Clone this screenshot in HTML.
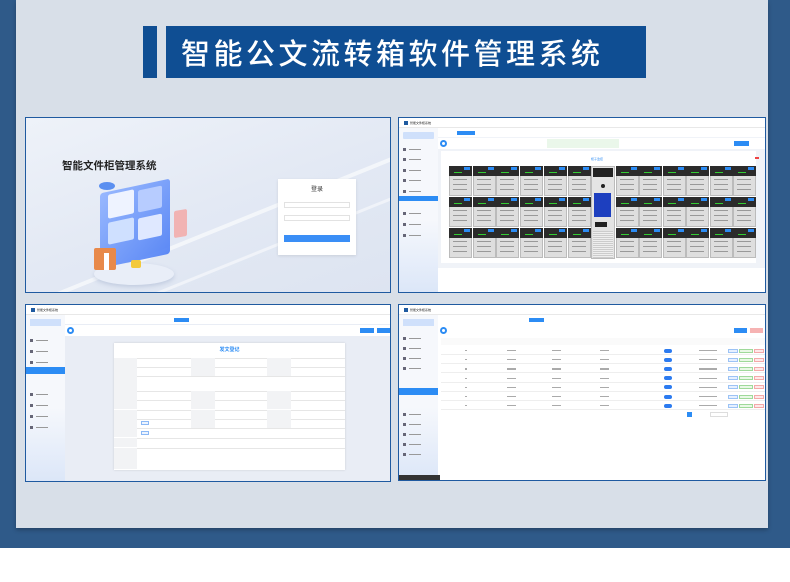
<!DOCTYPE html>
<html><head><meta charset="utf-8">
<style>
*{margin:0;padding:0;box-sizing:border-box}
body{width:790px;height:582px;background:#fff;position:relative;overflow:hidden;font-family:"Liberation Sans","Noto Sans CJK SC",sans-serif}
.a{position:absolute}
.shot{position:absolute;border:1.5px solid #1f5aa0;overflow:hidden;background:#f0f3f8}
.t{font-size:3px;color:#555;white-space:nowrap;line-height:1}
</style></head><body>
<div class="a" style="left:0;top:0;width:790px;height:548px;background:#2f5a89"></div>
<div class="a" style="left:16px;top:0;width:752px;height:528px;background:#d8dfe8;box-shadow:0 2px 4px rgba(0,0,0,.25)"></div>
<div class="a" style="left:143px;top:26px;width:14px;height:52px;background:#0f4e93"></div>
<div class="a" style="left:166px;top:26px;width:480px;height:52px;background:#0f4e93;color:#fff;font-size:29px;line-height:52px;padding-left:15px;letter-spacing:3.5px;font-family:'Noto Sans CJK SC',sans-serif;font-weight:500">智能公文流转箱软件管理系统</div>

<!-- TL login -->
<div class="shot" style="left:25px;top:117px;width:366px;height:176px;background:linear-gradient(160deg,#eef2f9 0%,#e3e9f4 50%,#dde4f1 100%)">
 <div class="a" style="left:-20px;top:110px;width:420px;height:4px;background:rgba(255,255,255,.6);transform:rotate(-22deg)"></div>
 <div class="a" style="left:-20px;top:150px;width:420px;height:3px;background:rgba(255,255,255,.5);transform:rotate(-22deg)"></div>
 <div class="a" style="left:36px;top:40px;font-size:10.5px;font-weight:bold;color:#222;font-family:'Noto Sans CJK SC',sans-serif">智能文件柜管理系统</div>
 <div class="a" style="left:68px;top:145px;width:80px;height:22px;border-radius:50%;background:#e9eef8;box-shadow:0 2px 4px rgba(120,140,180,.3)"></div>
 <div class="a" style="left:74px;top:68px;width:70px;height:75px;background:linear-gradient(135deg,#8fb2ff,#4d7ef5);border-radius:3px;transform:skewY(-12deg);opacity:.9"></div>
 <div class="a" style="left:82px;top:74px;width:26px;height:24px;background:#eef3ff;border-radius:2px;transform:skewY(-12deg)"></div>
 <div class="a" style="left:112px;top:70px;width:24px;height:22px;background:#b7ccff;border-radius:2px;transform:skewY(-12deg)"></div>
 <div class="a" style="left:82px;top:102px;width:26px;height:22px;background:#cfe0ff;border-radius:2px;transform:skewY(-12deg)"></div>
 <div class="a" style="left:112px;top:98px;width:24px;height:22px;background:#dfe8ff;border-radius:2px;transform:skewY(-12deg)"></div>
 <div class="a" style="left:68px;top:130px;width:22px;height:22px;background:#e8894a;border-radius:2px"></div>
 <div class="a" style="left:78px;top:135px;width:5px;height:17px;background:#fff"></div>
 <div class="a" style="left:105px;top:142px;width:10px;height:8px;background:#f3c93b;border-radius:2px"></div>
 <div class="a" style="left:148px;top:92px;width:13px;height:27px;background:#f1b3b3;border-radius:2px;transform:skewY(-10deg)"></div>
 <div class="a" style="left:73px;top:64px;width:16px;height:8px;background:#5b8ff0;border-radius:50%"></div>
 <div class="a" style="left:252px;top:61px;width:78px;height:76px;background:#fff;box-shadow:0 1px 3px rgba(0,0,0,.1)"></div>
 <div class="a" style="left:252px;top:66px;width:78px;text-align:center;font-size:6px;color:#333">登录</div>
 <div class="a" style="left:258px;top:84px;width:66px;height:6px;border:0.5px solid #e2e2e2"></div>
 <div class="a" style="left:258px;top:97px;width:66px;height:6px;border:0.5px solid #e2e2e2"></div>
 <div class="a" style="left:258px;top:117px;width:66px;height:7px;background:#3a8ef6"></div>
</div>

<!-- TR cabinets -->
<div class="shot" id="tr" style="left:398px;top:117px;width:368px;height:176px;background:#fff">
 <div class="a" style="left:0;top:0;width:368px;height:10px;background:#fff;border-bottom:.5px solid #e8e8e8"></div>
 <div class="a" style="left:5px;top:3px;width:4px;height:4px;background:#1f5aa0"></div>
 <div class="a t" style="left:11px;top:3.5px;color:#222">智能文件柜系统</div>
 <div class="a" id="sb1" style="left:0;top:10px;width:39px;height:166px;background:linear-gradient(180deg,#f6f8fc 55%,#dbe6f8)"></div>
 <div class="a" style="left:4px;top:14px;width:31px;height:7px;background:#cfe0fb;border-radius:1px"></div>
 <div class="a" style="left:0;top:78px;width:39px;height:5px;background:#2c8cf4"></div>
 <div class="a" style="left:39px;top:10px;width:329px;height:166px;background:#f0f3f8"></div>
 <div class="a" style="left:39px;top:10px;width:329px;height:9px;background:#fff"></div>
 <div class="a" style="left:58px;top:13px;width:18px;height:4px;background:#2c8cf4"></div>
 <div class="a" style="left:39px;top:20px;width:329px;height:11px;background:#fff"></div>
 <div class="a" style="left:41px;top:22px;width:7px;height:7px;border-radius:50%;border:2px solid #2c8cf4"></div>
 <div class="a" style="left:148px;top:21px;width:72px;height:9px;background:#eaf7ea"></div>
 <div class="a" style="left:335px;top:23px;width:15px;height:5px;background:#2c8cf4"></div>
 <div class="a" style="left:42px;top:33px;width:315px;height:112px;background:#fff"></div>
 <div class="a" style="left:39px;top:150px;width:329px;height:26px;background:#fff"></div>
 <div class="a" style="left:192px;top:39px;font-size:3px;color:#2c8cf4">柜子监控</div>
 <div class="a" style="left:356px;top:39px;width:4px;height:2px;background:#e44"></div>
 <div id="cab"></div>
</div>

<!-- BL form -->
<div class="shot" style="left:25px;top:304px;width:366px;height:178px;background:#e9edf5">
 <div class="a" style="left:0;top:0;width:366px;height:10px;background:#fff;border-bottom:.5px solid #e8e8e8"></div>
 <div class="a" style="left:5px;top:3px;width:4px;height:4px;background:#1f5aa0"></div>
 <div class="a t" style="left:11px;top:3.5px;color:#222">智能文件柜系统</div>
 <div class="a" style="left:0;top:10px;width:39px;height:168px;background:linear-gradient(180deg,#f6f8fc 55%,#dbe6f8)"></div>
 <div class="a" style="left:4px;top:14px;width:31px;height:7px;background:#cfe0fb"></div>
 <div class="a" style="left:0;top:62px;width:39px;height:7px;background:#2c8cf4"></div>
 <div class="a" style="left:39px;top:10px;width:327px;height:9px;background:#fff"></div>
 <div class="a" style="left:148px;top:13px;width:15px;height:4px;background:#2c8cf4"></div>
 <div class="a" style="left:39px;top:20px;width:327px;height:11px;background:#fff"></div>
 <div class="a" style="left:41px;top:22px;width:7px;height:7px;border-radius:50%;border:2px solid #2c8cf4"></div>
 <div class="a" style="left:334px;top:23px;width:14px;height:5px;background:#2c8cf4"></div>
 <div class="a" style="left:351px;top:23px;width:13px;height:5px;background:#2c8cf4"></div>
 <div class="a" style="left:88px;top:38px;width:231px;height:127px;background:#fff;box-shadow:0 0 2px rgba(0,0,0,.15)"></div>
 <div class="a" style="left:88px;top:41px;width:231px;text-align:center;font-size:5px;color:#2c8cf4;font-weight:bold">发文登记</div>
 <div id="form"></div>
</div>

<!-- BR table -->
<div class="shot" style="left:398px;top:304px;width:368px;height:177px;background:#fff">
 <div class="a" style="left:0;top:0;width:368px;height:10px;background:#fff;border-bottom:.5px solid #e8e8e8"></div>
 <div class="a" style="left:5px;top:3px;width:4px;height:4px;background:#1f5aa0"></div>
 <div class="a t" style="left:11px;top:3.5px;color:#222">智能文件柜系统</div>
 <div class="a" style="left:0;top:10px;width:39px;height:167px;background:linear-gradient(180deg,#f6f8fc 55%,#dbe6f8)"></div>
 <div class="a" style="left:4px;top:14px;width:31px;height:7px;background:#cfe0fb"></div>
 <div class="a" style="left:0;top:83px;width:39px;height:7px;background:#2c8cf4"></div>
 <div class="a" style="left:0;top:170px;width:41px;height:5px;background:#333"></div>
 <div class="a" style="left:39px;top:10px;width:329px;height:9px;background:#fff"></div>
 <div class="a" style="left:130px;top:13px;width:15px;height:4px;background:#2c8cf4"></div>
 <div class="a" style="left:41px;top:22px;width:7px;height:7px;border-radius:50%;border:2px solid #2c8cf4"></div>
 <div class="a" style="left:335px;top:23px;width:13px;height:5px;background:#2c8cf4"></div>
 <div class="a" style="left:351px;top:23px;width:13px;height:5px;background:#f6b3b3"></div>
 <div id="tbl"></div>
</div>

<script>
function h(p,s){document.getElementById(p).insertAdjacentHTML('beforeend',s)}
function side(id,ys){var s='';ys.forEach(function(y){s+='<div class="a" style="left:4px;top:'+y+'px;width:3px;height:3px;background:#667"></div><div class="a" style="left:10px;top:'+(y+1)+'px;width:12px;height:1.2px;background:#999"></div>';});h(id,s)}
side('tr',[30,40,51,61,72,94,105,116]);
side('form',[]);
// cabinets
var c='';
for(var r=0;r<3;r++){var y=48+r*31;
 for(var i=0;i<12;i++){var x=i<6?50+i*23.7:217+(i-6)*23.4;
  c+='<div class="a" style="left:'+x+'px;top:'+y+'px;width:23px;height:30px;background:#dedede;border:.5px solid #bbb"></div>';
  c+='<div class="a" style="left:'+x+'px;top:'+y+'px;width:23px;height:10px;background:#2b2b2b"></div>';
  c+='<div class="a" style="left:'+(x+15)+'px;top:'+(y+1)+'px;width:6px;height:3px;background:#2c8cf4"></div>';
  c+='<div class="a" style="left:'+(x+5)+'px;top:'+(y+6)+'px;width:8px;height:1px;background:#3c3"></div>';
  for(var k=0;k<3;k++)c+='<div class="a" style="left:'+(x+4)+'px;top:'+(y+13+k*5)+'px;width:14px;height:1px;background:#999"></div>';
 }}
c+='<div class="a" style="left:192px;top:48px;width:24px;height:93px;background:#e4e4e4;border:.5px solid #bbb"></div>';
c+='<div class="a" style="left:194px;top:50px;width:20px;height:9px;background:#222"></div>';
c+='<div class="a" style="left:202px;top:66px;width:4px;height:4px;border-radius:50%;background:#222"></div>';
c+='<div class="a" style="left:195px;top:75px;width:17px;height:24px;background:#1d3fbf"></div>';
c+='<div class="a" style="left:196px;top:104px;width:12px;height:5px;background:#222"></div>';
c+='<div class="a" style="left:194px;top:113px;width:20px;height:27px;background:repeating-linear-gradient(180deg,#ccc 0 1px,#eee 1px 2px)"></div>';
h('cab',c);
// form
var f='';
var hs=[9,9,15,9,9,9,9,9,9,21],ys=[53,62,71,86,95,105,114,123,133,143];
for(var i=0;i<ys.length;i++){
 f+='<div class="a" style="left:88px;top:'+ys[i]+'px;width:231px;height:'+hs[i]+'px;border-top:.5px solid #e6e6e6"></div>';
 f+='<div class="a" style="left:88px;top:'+ys[i]+'px;width:23px;height:'+hs[i]+'px;background:#f2f3f5"></div>';
 if(hs[i]==9&&i!=7&&i!=8){f+='<div class="a" style="left:165px;top:'+ys[i]+'px;width:24px;height:9px;background:#f2f3f5"></div>';
  f+='<div class="a" style="left:241px;top:'+ys[i]+'px;width:24px;height:9px;background:#f2f3f5"></div>';}
}
f+='<div class="a" style="left:115px;top:116px;width:8px;height:4px;border:.5px solid #8bb8f5;background:#ecf4ff"></div>';
f+='<div class="a" style="left:115px;top:126px;width:8px;height:4px;border:.5px solid #8bb8f5;background:#ecf4ff"></div>';
[34,45,56,88,99,110,121].forEach(function(y){f+='<div class="a" style="left:4px;top:'+y+'px;width:3px;height:3px;background:#667"></div><div class="a" style="left:10px;top:'+(y+1)+'px;width:12px;height:1.2px;background:#999"></div>';});
h('form',f);
// table
var t='<div class="a" style="left:42px;top:33px;width:326px;height:7px;background:#fafafa"></div>';
var cols=[70,112,157,205,262,313,338];
for(var r=0;r<7;r++){var y=44+r*9.2;
 t+='<div class="a" style="left:42px;top:'+(y+5)+'px;width:324px;height:.5px;background:#eee"></div>';
 for(var k=0;k<4;k++)t+='<div class="a" style="left:'+(cols[k]-4)+'px;top:'+(y+1)+'px;width:'+(k==0?2:9)+'px;height:1.2px;background:#aaa"></div>';
 t+='<div class="a" style="left:265px;top:'+(y-0.5)+'px;width:8px;height:4px;border-radius:2px;background:#2c7bf0"></div>';
 t+='<div class="a" style="left:300px;top:'+(y+1)+'px;width:18px;height:1.2px;background:#aaa"></div>';
 t+='<div class="a" style="left:329px;top:'+(y-0.5)+'px;width:10px;height:4px;background:#e6f0ff;border:.5px solid #9cc3f5"></div>';
 t+='<div class="a" style="left:340px;top:'+(y-0.5)+'px;width:14px;height:4px;background:#e9f8e6;border:.5px solid #9fd99a"></div>';
 t+='<div class="a" style="left:355px;top:'+(y-0.5)+'px;width:10px;height:4px;background:#fde9e9;border:.5px solid #f3a9a9"></div>';
}
t+='<div class="a" style="left:288px;top:107px;width:5px;height:5px;background:#2c8cf4"></div>';
t+='<div class="a" style="left:311px;top:107px;width:18px;height:5px;border:.5px solid #ddd"></div>';
[32,42,52,62,108,118,128,138,148].forEach(function(y){t+='<div class="a" style="left:4px;top:'+y+'px;width:3px;height:3px;background:#667"></div><div class="a" style="left:10px;top:'+(y+1)+'px;width:12px;height:1.2px;background:#999"></div>';});
h('tbl',t);
</script>
</body></html>
